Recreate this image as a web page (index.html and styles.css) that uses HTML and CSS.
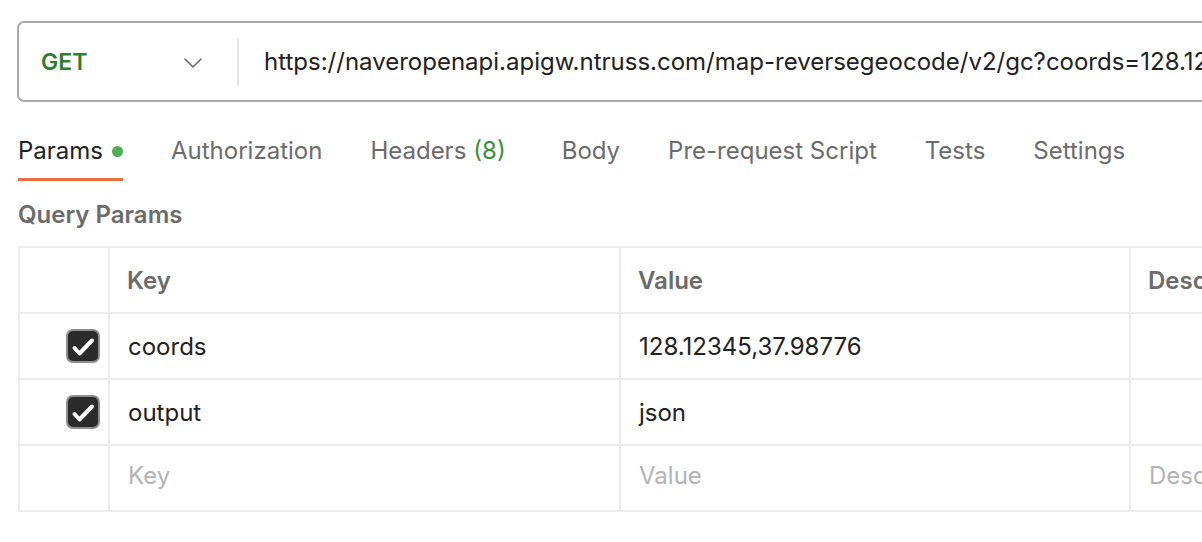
FILE: index.html
```html
<!DOCTYPE html>
<html lang="en">
<head>
    <meta charset="UTF-8">
    <meta name="viewport" content="width=device-width, initial-scale=1.0">
    <title>Request - Params</title>
    <link rel="stylesheet" href="styles.css">
</head>
<body>

    <div class="request">
        <!-- URL bar -->
        <div class="url-bar">
            <div class="method">
                <span class="method-name">GET</span>
                <svg class="chevron" width="18" height="10" viewBox="0 0 18 10">
                    <path d="M1 1 L9 9 L17 1" fill="none" stroke="#6b6b6b" stroke-width="1.6" stroke-linecap="round" stroke-linejoin="round"/>
                </svg>
            </div>
            <div class="divider"></div>
            <div class="url">https://naveropenapi.apigw.ntruss.com/map-reversegeocode/v2/gc?coords=128.12</div>
        </div>

        <!-- Tabs -->
        <div class="tabs">
            <div class="tab active">Params <span class="dot"></span></div>
            <div class="tab">Authorization</div>
            <div class="tab headers">Headers <span class="count">(8)</span></div>
            <div class="tab">Body</div>
            <div class="tab">Pre-request Script</div>
            <div class="tab">Tests</div>
            <div class="tab">Settings</div>
        </div>

        <h3 class="section-title">Query Params</h3>

        <table class="params">
            <colgroup>
                <col class="col-check">
                <col class="col-key">
                <col class="col-value">
                <col class="col-desc">
            </colgroup>
            <tr class="head">
                <th></th>
                <th>Key</th>
                <th>Value</th>
                <th>Desc</th>
            </tr>
            <tr>
                <td class="check"><span class="checkbox"><svg width="26" height="26" viewBox="0 0 26 26"><path d="M4.5 15 L9.5 20.5 L22 7.5" fill="none" stroke="#fff" stroke-width="4" stroke-linecap="round" stroke-linejoin="round"/></svg></span></td>
                <td>coords</td>
                <td>128.12345,37.98776</td>
                <td></td>
            </tr>
            <tr>
                <td class="check"><span class="checkbox"><svg width="26" height="26" viewBox="0 0 26 26"><path d="M4.5 15 L9.5 20.5 L22 7.5" fill="none" stroke="#fff" stroke-width="4" stroke-linecap="round" stroke-linejoin="round"/></svg></span></td>
                <td>output</td>
                <td>json</td>
                <td></td>
            </tr>
            <tr class="placeholder">
                <td></td>
                <td>Key</td>
                <td>Value</td>
                <td>Desc</td>
            </tr>
        </table>
    </div>

</body>
</html>
```

FILE: styles.css
```css
body {
    margin: 0;
    padding: 0;
    font-family: Inter, "Noto Sans", sans-serif;
    background-color: #fff;
    color: #212121;
    overflow: hidden;
}

.request {
    padding: 21px 0 0 17px;
    width: 1185px;
}

/* URL bar */
.url-bar {
    display: flex;
    align-items: center;
    height: 77px;
    border: 2px solid #a9a9a9;
    border-right: none;
    border-radius: 7px 0 0 7px;
    overflow: hidden;
}

.method {
    display: flex;
    align-items: center;
    justify-content: space-between;
    flex-shrink: 0;
    width: 161px;
    padding: 0 35px 0 22px;
}

.method-name {
    font-size: 23px;
    font-weight: 600;
    color: #2f7d32;
}

.chevron {
    display: block;
    margin-top: 2px;
}

.divider {
    flex-shrink: 0;
    width: 2px;
    height: 48px;
    background-color: #e6e6e6;
}

.url {
    padding-left: 25px;
    font-size: 24px;
    white-space: nowrap;
}

/* Tabs */
.tabs {
    display: flex;
    gap: 48px;
    margin-top: 35px;
    margin-left: 1px;
}

.tab {
    display: flex;
    align-items: center;
    font-size: 24px;
    line-height: 28px;
    color: #6b6b6b;
    padding-bottom: 13px;
    border-bottom: 3px solid transparent;
    white-space: nowrap;
}

.tab.active {
    color: #212121;
    border-bottom-color: #e8703f;
}

.tab.headers {
    margin-right: 8px;
}

.dot {
    display: inline-block;
    width: 11px;
    height: 11px;
    margin-left: 9px;
    border-radius: 50%;
    background-color: #4caf50;
}

.count {
    color: #388e3c;
    margin-left: 7px;
}

.section-title {
    margin: 20px 0 17px 1px;
    font-size: 24px;
    line-height: 28px;
    font-weight: 600;
    color: #6b6b6b;
}

/* Params table */
.params {
    border-collapse: collapse;
    table-layout: fixed;
    width: 1187px;
    margin-left: 1px;
}

.col-check { width: 90px; }
.col-key { width: 511px; }
.col-value { width: 510px; }

.params th,
.params td {
    border: 2px solid #ececec;
    border-right: none;
    height: 64px;
    padding: 0 0 0 17px;
    font-size: 24px;
    text-align: left;
    white-space: nowrap;
    overflow: hidden;
}

.params th {
    font-weight: 600;
    color: #6b6b6b;
}

.params td {
    padding-left: 18px;
}

.params td.check {
    padding: 0 8px 0 0;
    text-align: right;
    vertical-align: middle;
}

.checkbox {
    display: inline-flex;
    align-items: center;
    justify-content: center;
    width: 30px;
    height: 30px;
    border: 2px solid #8f8f8f;
    border-radius: 7px;
    background-color: #2b2b2b;
    vertical-align: middle;
}

.placeholder td {
    color: #b3b3b3;
    height: 58px;
    padding-bottom: 6px;
}
```
